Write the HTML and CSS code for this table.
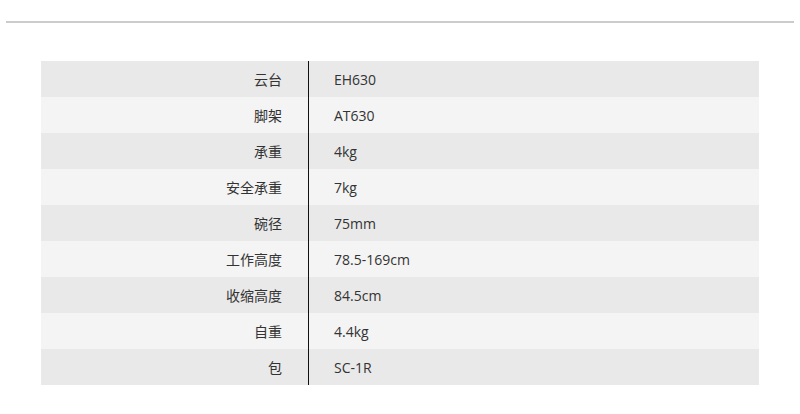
FILE: index.html
```html
<!DOCTYPE html>
<html lang="zh-CN">
<head>
<meta charset="utf-8">
<title>参数</title>
<link rel="stylesheet" href="styles.css">
</head>
<body>
<div class="rule"></div>
<table class="specs">
  <tbody>
    <tr><th>云台</th><td>EH630</td></tr>
    <tr><th>脚架</th><td>AT630</td></tr>
    <tr><th>承重</th><td>4kg</td></tr>
    <tr><th>安全承重</th><td>7kg</td></tr>
    <tr><th>碗径</th><td>75mm</td></tr>
    <tr><th>工作高度</th><td>78.5-169cm</td></tr>
    <tr><th>收缩高度</th><td>84.5cm</td></tr>
    <tr><th>自重</th><td>4.4kg</td></tr>
    <tr><th>包</th><td>SC-1R</td></tr>
  </tbody>
</table>
</body>
</html>
```
FILE: styles.css
```css
html, body {
  margin: 0;
  padding: 0;
  background: #fff;
}
body {
  font-family: "Open Sans", "Noto Sans CJK SC", sans-serif;
  color: #333;
  font-size: 14px;
}
.rule {
  margin: 21px 6px 0 6px;
  height: 2px;
  background: #cccccc;
}
.specs {
  margin: 38px 0 0 41px;
  width: 718px;
  border-collapse: collapse;
  border-spacing: 0;
}
.specs tr {
  height: 36px;
}
.specs tr:nth-child(odd) {
  background: #e9e9e9;
}
.specs tr:nth-child(even) {
  background: #f4f4f4;
}
.specs th {
  width: 241px;
  padding: 0 26px 0 0;
  text-align: right;
  font-weight: normal;
  border-right: 1px solid #111;
  vertical-align: middle;
  font-family: "Noto Sans CJK SC", sans-serif;
}
.specs td {
  padding: 0 0 0 25px;
  text-align: left;
  vertical-align: middle;
}
```
